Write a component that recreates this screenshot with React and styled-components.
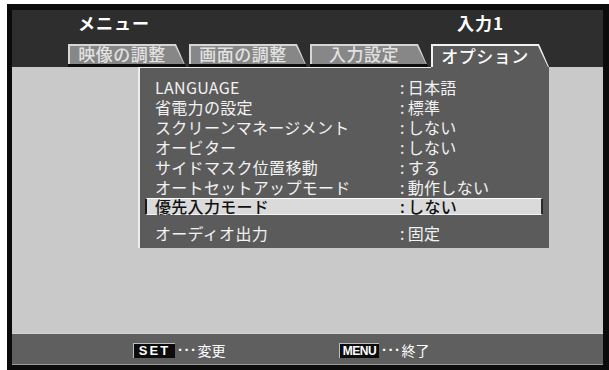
import React from "react";
import styled, { createGlobalStyle } from "styled-components";

const Global = createGlobalStyle`
  html, body { margin: 0; padding: 0; background: #ffffff; }
  body { font-family: "Noto Sans CJK JP", "Noto Sans", sans-serif; }
`;

const Frame = styled.div`
  box-sizing: border-box;
  margin: 4px 0 0 7px;
  width: 602px;
  height: 366px;
  background: #0b0b0b;
  padding: 6px 6px 5px 5px;
`;

const Screen = styled.div`
  display: flex;
  flex-direction: column;
  height: 100%;
`;

const Header = styled.header`
  background: #2e2e2e;
  height: 57px;
  display: flex;
  flex-direction: column;
`;

const TitleRow = styled.div`
  box-sizing: border-box;
  height: 33px;
  display: flex;
  justify-content: space-between;
  padding: 1px 99px 0 66px;
  color: #ffffff;
  font-size: 17px;
  line-height: 24px;
  font-weight: 700;
  letter-spacing: 1px;
`;

const TabRow = styled.nav`
  height: 24px;
  display: flex;
  align-items: flex-end;
  gap: 3px;
  padding-left: 56px;
`;

const Tab = styled.div`
  position: relative;
  isolation: isolate;
  box-sizing: border-box;
  width: 118px;
  height: 23px;
  display: flex;
  align-items: center;
  justify-content: center;
  padding: ${(p) => (p.$active ? "1px 12px 0 2px" : "0 12px 3px 2px")};
  font-size: 17px;
  line-height: 18px;
  letter-spacing: 0.5px;
  font-weight: 500;
  color: ${(p) => (p.$active ? "#ffffff" : "#e2e2e2")};

  &::before {
    content: "";
    position: absolute;
    inset: 0;
    z-index: -1;
    clip-path: polygon(0 0, calc(100% - 10px) 0, 100% 100%, 0 100%);
    background: ${(p) =>
      p.$active
        ? "#f2f2f2"
        : "linear-gradient(to bottom, #d6d6d6 0, #d6d6d6 calc(100% - 3px), #0d0d0d calc(100% - 3px))"};
  }

  &::after {
    content: "";
    position: absolute;
    inset: ${(p) => (p.$active ? "2px 0 0 2px" : "2px 0 3px 2px")};
    z-index: -1;
    clip-path: ${(p) =>
      p.$active
        ? "polygon(0 0, calc(100% - 11px) 0, calc(100% - 1px) 100%, 0 100%)"
        : "polygon(0 0, calc(100% - 11px) 0, calc(100% - 2px) 100%, 0 100%)"};
    background: ${(p) => (p.$active ? "#5b5b5b" : "#878787")};
  }
`;

const Body = styled.main`
  flex: 1;
  background: #c9c9c9;
  display: flex;
  align-items: flex-start;
  padding-left: 126px;
`;

const Panel = styled.section`
  box-sizing: border-box;
  width: 411px;
  border-left: 2px solid #eeeeee;
  background: linear-gradient(#eaeaea, #eaeaea) top left / 291px 1px no-repeat,
    #5b5b5b;
  padding: 10px 0 5px 0;
  display: flex;
  flex-direction: column;
`;

const Row = styled.div`
  box-sizing: border-box;
  display: grid;
  grid-template-columns: 245px 1fr;
  align-items: center;
  height: 20px;
  padding-left: 15px;
  margin-top: ${(p) => p.$gap || 0}px;
  font-size: 16px;
  line-height: 19px;
  color: #f2f2f2;
  letter-spacing: 0.3px;
`;

const SelectedRow = styled(Row)`
  height: 17px;
  margin: 1px 6px 0 5px;
  padding-left: 8px;
  line-height: 15px;
  background: #dadada;
  color: #111111;
  font-weight: 500;
  border-top: 1px solid #ffffff;
  border-left: 2px solid #1a1a1a;
  border-right: 2px solid #2a2a2a;
  border-bottom: 1px solid #f4f4f4;
`;

const Value = styled.span`
  &::before {
    content: ":";
    margin-right: 3px;
  }
`;

const Footer = styled.footer`
  box-sizing: border-box;
  height: 32px;
  background: #5f5f5f;
  border-top: 1px solid #d4d4d4;
  border-bottom: 1px solid #9a9a9a;
  display: flex;
  align-items: center;
  padding: 2px 0 0 121px;
  color: #ffffff;
`;

const FooterItem = styled.div`
  display: flex;
  align-items: center;
  width: ${(p) => p.$w || "auto"};
  font-size: 14px;
  line-height: 16px;
`;

const Key = styled.span`
  box-sizing: border-box;
  display: inline-flex;
  align-items: center;
  justify-content: center;
  width: ${(p) => p.$w}px;
  height: 15px;
  background: #0c0c0c;
  color: #ffffff;
  font-family: "Liberation Sans", Arial, sans-serif;
  font-weight: 700;
  font-size: ${(p) => p.$size || 13}px;
  letter-spacing: ${(p) => p.$ls || 0}px;
  border-top: 1px solid #bdbdbd;
  border-left: 1px solid #bdbdbd;
`;

const Dots = styled.span`
  font-family: "Liberation Sans", Arial, sans-serif;
  font-weight: 700;
  font-size: 15px;
  letter-spacing: 1.5px;
  margin: 0 0 0 3px;
`;

const tabs = ["映像の調整", "画面の調整", "入力設定", "オプション"];

const items = [
  ["LANGUAGE", "日本語"],
  ["省電力の設定", "標準"],
  ["スクリーンマネージメント", "しない"],
  ["オービター", "しない"],
  ["サイドマスク位置移動", "する"],
  ["オートセットアップモード", "動作しない"],
];

export default function App() {
  return (
    <>
      <Global />
      <Frame>
        <Screen>
          <Header>
            <TitleRow>
              <span>メニュー</span>
              <span>入力1</span>
            </TitleRow>
            <TabRow>
              {tabs.map((t, i) => (
                <Tab key={t} $active={i === 3}>
                  {t}
                </Tab>
              ))}
            </TabRow>
          </Header>
          <Body>
            <Panel>
              {items.map(([label, value]) => (
                <Row key={label}>
                  <span>{label}</span>
                  <Value>{value}</Value>
                </Row>
              ))}
              <SelectedRow>
                <span>優先入力モード</span>
                <Value>しない</Value>
              </SelectedRow>
              <Row $gap={8}>
                <span>オーディオ出力</span>
                <Value>固定</Value>
              </Row>
            </Panel>
          </Body>
          <Footer>
            <FooterItem $w="206px">
              <Key $w={42} $ls={2}>SET</Key>
              <Dots>···</Dots>
              <span>変更</span>
            </FooterItem>
            <FooterItem>
              <Key $w={40} $size={12} $ls={-0.5}>MENU</Key>
              <Dots>···</Dots>
              <span>終了</span>
            </FooterItem>
          </Footer>
        </Screen>
      </Frame>
    </>
  );
}
